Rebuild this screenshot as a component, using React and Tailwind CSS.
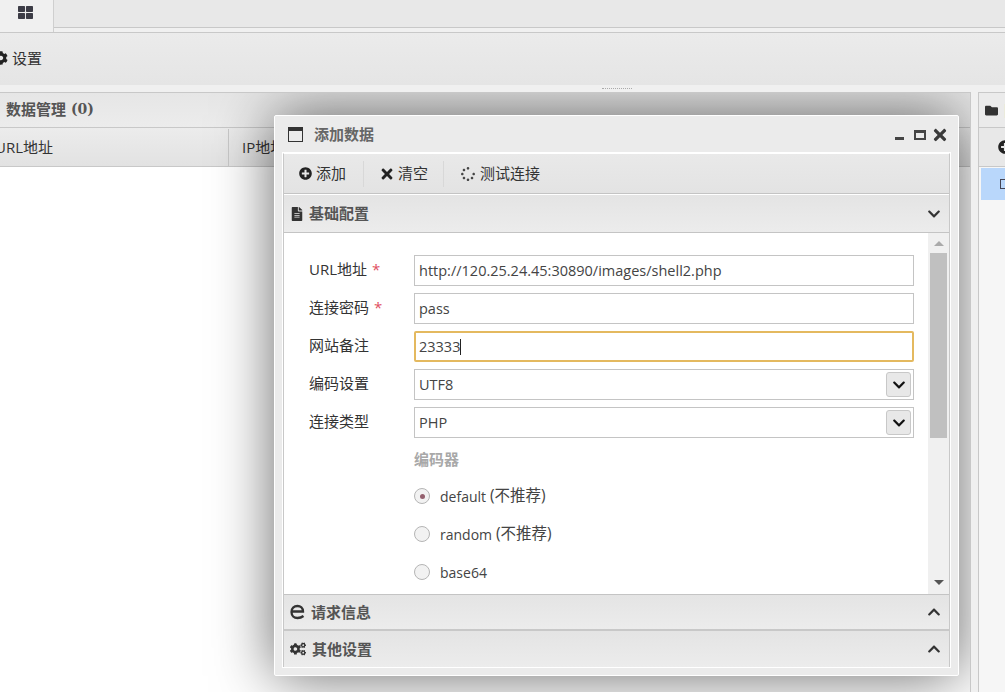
import { FaCog, FaThLarge, FaFolder, FaPlusCircle, FaTimes, FaFileAlt, FaChevronDown, FaChevronUp, FaCogs, FaSpinner } from "react-icons/fa";

const font = { fontFamily: '"Open Sans", "Noto Sans CJK SC", sans-serif' };

const Field = ({ label, star, focus, children, select, mt }) => (
    <div className={`flex items-center ${mt}`}>
        <div className="w-[130px] pl-[25px] pb-[3px] text-[15px] text-[#333] flex gap-[5px] whitespace-nowrap">
            <span>{label}</span>
            {star && <span className="text-[#e0505f]">*</span>}
        </div>
        <div className={`w-[500px] h-[31px] flex items-center justify-between pr-[2px] text-[14.5px] text-[#444] bg-white ${focus ? "border-2 border-[#e4b95f] rounded-[2px] pl-[3px]" : "border border-[#c4c4c4] pl-[4px]"}`}>
            <span className="flex items-center">{children}</span>
            {select && (
                <span className="w-[25px] h-[25px] bg-[#e8e8e8] border border-[#c8c8c8] rounded-[3px] flex items-center justify-center">
                    <FaChevronDown className="text-[#111] text-[14px]" />
                </span>
            )}
        </div>
    </div>
);

const Radio = ({ checked, label, note }) => (
    <div className="flex items-center h-[38px] pl-[130px] text-[14px] text-[#444]">
        <span className="w-[16px] h-[16px] rounded-full border border-[#b5b5b5] bg-[#f2f2f2] flex items-center justify-center mr-[10px]">
            {checked && <span className="w-[5px] h-[5px] rounded-full bg-[#94606e]" />}
        </span>
        {label}
        {note && <span className="text-[15.5px] ml-[4px]">{note}</span>}
    </div>
);

const Section = ({ icon, title, chevron, height, gap }) => (
    <div className={`${height} ${gap} shrink-0 bg-gradient-to-b from-[#e4e4e4] to-[#ececec] flex items-center pl-[6px] pr-[8px] text-[15px] font-bold text-[#555]`}>
        {icon}
        <span className="flex-1">{title}</span>
        {chevron}
    </div>
);

const App = () => {
    return (
        <div style={font} className="relative w-[1005px] h-[692px] overflow-hidden bg-[#f0f0f0]">
            {/* tabs */}
            <div className="h-[33px] flex border-b border-[#c8c8c8]">
                <div className="w-[54px] border-r border-[#cfcfcf] flex justify-center pt-[5px] pr-[3px]">
                    <FaThLarge className="text-[#3c3c46] text-[15px]" />
                </div>
                <div className="flex-1 h-[28px] bg-[#e8e8e8] border-b border-[#c8c8c8]" />
            </div>

            {/* toolbar */}
            <div className="h-[52px] pb-[2px] bg-gradient-to-b from-[#ebebeb] to-[#e5e5e5] flex items-center text-[15px] text-[#333]">
                <FaCog className="text-[#222] text-[14px] -ml-[6px] mr-[4px]" />
                设置
            </div>

            {/* splitter */}
            <div className="h-[7px] flex justify-center items-center">
                <div className="w-[30px] ml-[228px] border-t border-dotted border-[#aaa]" />
            </div>

            {/* panels */}
            <div className="flex h-[600px] gap-[7px]">
                {/* the dialog lives in this panel, so its shadow stops at the panel edge */}
                <div className="relative overflow-hidden w-[971px] shrink-0 border-r border-t border-[#c8c8c8] flex flex-col">
                    <div className="h-[35px] pb-[2px] shrink-0 bg-gradient-to-b from-[#e6e6e6] to-[#ececec] border-b border-[#c8c8c8] flex items-center pl-[6px] text-[15px] font-bold text-[#555] whitespace-pre">
                        数据管理<span className="text-[14px] font-['DejaVu_Serif']"> (0)</span>
                    </div>
                    <div className="h-[39px] pt-[1px] shrink-0 bg-gradient-to-b from-[#ececec] to-[#e2e2e2] border-b border-[#c8c8c8] flex text-[15px] text-[#333]">
                        <div className="w-[229px] border-r border-[#c8c8c8] flex items-center -indent-[5px]">URL地址</div>
                        <div className="flex items-center pl-[13px]">IP地址</div>
                    </div>
                    <div className="flex-1 bg-white" />

                    {/* dialog */}
                    <div className="absolute left-[274px] top-[22px] w-[685px] h-[561px] bg-[#ebebeb] border border-white rounded-[2px] shadow-[0_0_60px_rgba(0,0,0,0.6)] flex flex-col">
                        <div className="h-[37px] shrink-0 flex items-center justify-between pl-[13px] pr-[9px]">
                            <span className="flex items-center gap-[11px] text-[15px] font-bold text-[#666]">
                                <svg width="15" height="15" viewBox="0 0 15 15">
                                    <rect x="0.5" y="0.5" width="14" height="14" fill="none" stroke="#333" />
                                    <rect x="0" y="0" width="15" height="4" fill="#333" />
                                </svg>
                                添加数据
                            </span>
                            <span className="flex items-center">
                                <span className="w-[9px] h-[3px] bg-[#444] mt-[7px] mr-[10px]" />
                                <span className="w-[12px] h-[10px] border-2 border-[#444] border-t-[3px] mr-[5px]" />
                                <FaTimes className="text-[#3a3a3a] text-[18px]" />
                            </span>
                        </div>
                        <div className="mx-[8px] mb-[8px] flex-1 min-h-0 border border-[#c8c8c8] border-t-white shadow-[0_0_0_1px_#ffffff] flex flex-col">
                            <div className="h-[40px] shrink-0 bg-gradient-to-b from-[#e9e9e9] to-[#e3e3e3] border-b border-[#c4c4c4] flex items-center text-[15px] text-[#333]">
                                <div className="flex items-center gap-[4px] pl-[15px] pr-[17px] h-[26px] border-r border-[#d8d8d8]">
                                    <FaPlusCircle className="text-[#222] text-[13px]" />添加
                                </div>
                                <div className="flex items-center gap-[3px] pl-[15px] pr-[15px] h-[26px] border-r border-[#d8d8d8]">
                                    <FaTimes className="text-[#222] text-[16px]" />清空
                                </div>
                                <div className="flex items-center gap-[5px] pl-[17px]">
                                    <FaSpinner className="text-[#444] text-[14px]" />测试连接
                                </div>
                            </div>
                            <div className="border-t border-white" />
                            <Section
                                height="h-[37px]"
                                gap="gap-[5px]"
                                icon={<FaFileAlt className="text-[#333] text-[14px]" />}
                                title="基础配置"
                                chevron={<FaChevronDown className="text-[#333] text-[14px]" />}
                            />
                            <div className="h-[363px] shrink-0 bg-white border-t border-b border-[#c4c4c4] flex">
                                <div className="flex-1 pt-[22px]">
                                    <Field label="URL地址" star>http://120.25.24.45:30890/images/shell2.php</Field>
                                    <Field label="连接密码" star mt="mt-[7px]">pass</Field>
                                    <Field label="网站备注" focus mt="mt-[7px]">23333<span className="w-px h-[16px] bg-[#222]" /></Field>
                                    <Field label="编码设置" select mt="mt-[7px]">UTF8</Field>
                                    <Field label="连接类型" select mt="mt-[7px]">PHP</Field>
                                    <div className="pl-[130px] mt-[10px] h-[22px] text-[15px] font-bold text-[#a8a8a8]">编码器</div>
                                    <div className="mt-[7px]">
                                        <Radio checked label="default" note="(不推荐)" />
                                        <Radio label="random" note="(不推荐)" />
                                        <Radio label="base64" />
                                    </div>
                                </div>
                                <div className="w-[21px] bg-[#f0f0f0] flex flex-col items-center pt-[8px] pb-[9px]">
                                    <span className="w-0 h-0 border-x-[5px] border-x-transparent border-b-[5px] border-b-[#aaa]" />
                                    <span className="w-[17px] h-[185px] bg-[#c0c0c0] mt-[7px]" />
                                    <span className="flex-1" />
                                    <span className="w-0 h-0 border-x-[5px] border-x-transparent border-t-[5px] border-t-[#555]" />
                                </div>
                            </div>
                            <Section
                                height="h-[34px]"
                                gap="gap-[6px]"
                                icon={
                                    <svg width="15" height="16" viewBox="0 0 15 16" fill="none" stroke="#333" strokeWidth="2.3">
                                        <path d="M2 7.5H13C13 4 10.5 2 7.5 2C4 2 1.5 4.5 1.5 8C1.5 11.5 4 14 7.5 14C9.5 14 11.5 13.5 13.5 12" />
                                    </svg>
                                }
                                title="请求信息"
                                chevron={<FaChevronUp className="text-[#333] text-[14px]" />}
                            />
                            <div className="border-t-2 border-[#c8c8c8]" />
                            <Section
                                height="h-[36px]"
                                gap="gap-[6px]"
                                icon={<FaCogs className="text-[#333] text-[16px]" />}
                                title="其他设置"
                                chevron={<FaChevronUp className="text-[#333] text-[14px]" />}
                            />
                        </div>
                    </div>
                </div>
                <div className="flex-1 min-w-0 overflow-hidden border-l border-t border-[#c8c8c8] flex flex-col">
                    <div className="h-[35px] bg-[#ebebeb] border-b border-[#c8c8c8] flex items-center pl-[6px] gap-[5px] text-[15px] whitespace-nowrap text-[#555]">
                        <FaFolder className="text-[#333] text-[13px] shrink-0" />目录
                    </div>
                    <div className="h-[39px] bg-[#e8e8e8] border-b border-[#c8c8c8] flex items-center pl-[19px]">
                        <FaPlusCircle className="text-[#222] text-[14px] shrink-0" />
                    </div>
                    <div className="flex-1 bg-[#f6f6f6] pt-[1px] pl-[2px]">
                        <div className="h-[32px] bg-[#b9d7fb] flex items-center pl-[19px]">
                            <span className="w-[10px] h-[10px] shrink-0 border border-[#445]" />
                        </div>
                    </div>
                </div>
            </div>
        </div>
    );
};

export default App;
